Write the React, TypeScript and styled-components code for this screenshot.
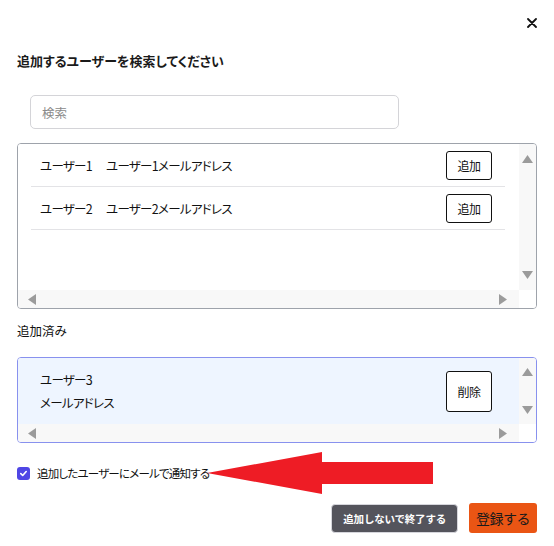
import React from "react";
import styled, { createGlobalStyle } from "styled-components";

const Global = createGlobalStyle`
  html, body { margin: 0; padding: 0; background: #ffffff; }
  body {
    font-family: "Noto Sans CJK JP", "Noto Sans", sans-serif;
    color: #1a1a1a;
    font-feature-settings: "palt";
  }
  * { box-sizing: border-box; }
`;

const Dialog = styled.div`
  position: relative;
  width: 554px;
  height: 546px;
  padding: 0 17px;
  display: flex;
  flex-direction: column;
`;

const Header = styled.div`
  display: flex;
  justify-content: flex-end;
  height: 46px;
  padding-top: 17px;
  margin-right: -1px;
`;

const CloseButton = styled.button`
  border: none;
  background: transparent;
  padding: 0;
  width: 12px;
  height: 12px;
  display: flex;
  align-items: center;
  justify-content: center;
  cursor: pointer;
`;

const Title = styled.h2`
  margin: 0;
  font-size: 13px;
  font-weight: 600;
  line-height: 30px;
  color: #1a1a1a;
`;

const SearchWrap = styled.div`
  padding-left: 13px;
  margin-top: 19px;
`;

const SearchInput = styled.input`
  width: 369px;
  height: 34px;
  border: 1px solid #d4d4d8;
  border-radius: 5px;
  padding: 0 11px;
  font-family: inherit;
  font-size: 12.5px;
  color: #333;
  outline: none;
  &::placeholder { color: #8a8a8a; }
`;

const ListBox = styled.div<{ $active?: boolean; $height: number }>`
  margin-top: ${(p) => (p.$active ? 0 : 14)}px;
  height: ${(p) => p.$height}px;
  border: 1px solid ${(p) => (p.$active ? "#8891ee" : "#9ea3ab")};
  border-radius: 4px;
  overflow: hidden;
  display: grid;
  grid-template-columns: 1fr 17px;
  grid-template-rows: 1fr 18px;
  background: #ffffff;
`;

const ListContent = styled.div<{ $active?: boolean }>`
  background: ${(p) => (p.$active ? "#eef5ff" : "#ffffff")};
  overflow: hidden;
`;

const VTrack = styled.div<{ $pad: number }>`
  background: #f8f8f8;
  display: flex;
  flex-direction: column;
  justify-content: space-between;
  align-items: center;
  padding: ${(p) => p.$pad}px 0;
`;

const HTrack = styled.div`
  background: #f8f8f8;
  display: flex;
  justify-content: space-between;
  align-items: center;
  padding: 0 12px 0 10px;
`;

const Corner = styled.div`
  background: #ffffff;
`;

const Tri = ({ dir }: { dir: "up" | "down" | "left" | "right" }) => {
  const pts = {
    up: "0,8 5.5,0 11,8",
    down: "0,0 11,0 5.5,8",
    left: "8,0 8,11 0,5.5",
    right: "0,0 8,5.5 0,11",
  }[dir];
  const vertical = dir === "up" || dir === "down";
  return (
    <svg width={vertical ? 11 : 8} height={vertical ? 8 : 11} viewBox={vertical ? "0 0 11 8" : "0 0 8 11"}>
      <polygon points={pts} fill="#9b9b9b" />
    </svg>
  );
};

const Row = styled.div<{ $tall?: boolean }>`
  display: flex;
  align-items: center;
  justify-content: space-between;
  margin: 0 14px 0 13px;
  padding: 0 13px 0 9px;
  height: ${(p) => (p.$tall ? 66 : 43)}px;
  border-bottom: ${(p) => (p.$tall ? "none" : "1px solid #e3e3e6")};
`;

const RowText = styled.div`
  font-size: 12.5px;
  letter-spacing: -0.7px;
  line-height: 23px;
  color: #111;
  display: flex;
  flex-direction: column;
`;

const Inline = styled.span`
  display: flex;
  gap: 14px;
`;

const SmallButton = styled.button<{ $tall?: boolean }>`
  width: 46px;
  height: ${(p) => (p.$tall ? 41 : 29)}px;
  border: 1px solid #111;
  border-radius: 3px;
  background: #fff;
  font-family: inherit;
  font-size: 12px;
  letter-spacing: -0.5px;
  color: #111;
  padding: 0;
  cursor: pointer;
`;

const SectionLabel = styled.div`
  margin-top: 13px;
  height: 35px;
  font-size: 12.5px;
  line-height: 18px;
  color: #111;
`;

const CheckRow = styled.label`
  display: flex;
  align-items: center;
  gap: 7px;
  margin-top: 22px;
  font-size: 11.5px;
  letter-spacing: -0.8px;
  color: #111;
  height: 16px;
`;

const CheckBox = styled.span`
  width: 13px;
  height: 13px;
  border-radius: 3px;
  background: #4f46e5;
  display: flex;
  align-items: center;
  justify-content: center;
`;

const Footer = styled.div`
  display: flex;
  justify-content: flex-end;
  align-items: center;
  gap: 11px;
  margin-top: 22px;
`;

const DarkButton = styled.button`
  height: 29px;
  padding: 0 11px;
  border: 1px solid #d6d6dc;
  border-radius: 4px;
  background: #54545c;
  color: #fff;
  font-family: inherit;
  font-size: 10.5px;
  letter-spacing: -0.2px;
  font-weight: 700;
  cursor: pointer;
`;

const PrimaryButton = styled.button`
  height: 30px;
  padding: 0 7px;
  border: none;
  border-radius: 3px;
  background: #ea5514;
  color: #1a1a1a;
  font-family: inherit;
  font-size: 14px;
  letter-spacing: -0.5px;
  cursor: pointer;
`;

const Arrow = styled.svg`
  position: absolute;
  left: 207px;
  top: 451px;
`;

const users = [
  { name: "ユーザー1", mail: "ユーザー1メールアドレス" },
  { name: "ユーザー2", mail: "ユーザー2メールアドレス" },
];

export default function App() {
  return (
    <>
      <Global />
      <Dialog>
        <Header>
          <CloseButton aria-label="close">
            <svg width="10" height="10" viewBox="0 0 10 10">
              <path d="M1 1L9 9M9 1L1 9" stroke="#111" strokeWidth="1.8" strokeLinecap="round" />
            </svg>
          </CloseButton>
        </Header>
        <Title>追加するユーザーを検索してください</Title>
        <SearchWrap>
          <SearchInput placeholder="検索" />
        </SearchWrap>
        <ListBox $height={166}>
          <ListContent>
            {users.map((u) => (
              <Row key={u.name}>
                <RowText>
                  <Inline>
                    <span>{u.name}</span>
                    <span>{u.mail}</span>
                  </Inline>
                </RowText>
                <SmallButton>追加</SmallButton>
              </Row>
            ))}
          </ListContent>
          <VTrack $pad={11}>
            <Tri dir="up" />
            <Tri dir="down" />
          </VTrack>
          <HTrack>
            <Tri dir="left" />
            <Tri dir="right" />
          </HTrack>
          <Corner />
        </ListBox>
        <SectionLabel>追加済み</SectionLabel>
        <ListBox $active $height={86}>
          <ListContent $active>
            <Row $tall>
              <RowText>
                <span>ユーザー3</span>
                <span>メールアドレス</span>
              </RowText>
              <SmallButton $tall>削除</SmallButton>
            </Row>
          </ListContent>
          <VTrack $pad={10}>
            <Tri dir="up" />
            <Tri dir="down" />
          </VTrack>
          <HTrack>
            <Tri dir="left" />
            <Tri dir="right" />
          </HTrack>
          <Corner />
        </ListBox>
        <CheckRow>
          <CheckBox>
            <svg width="9" height="9" viewBox="0 0 10 10">
              <path d="M2 5.2L4.1 7.2L8 2.8" stroke="#fff" strokeWidth="1.8" fill="none" strokeLinecap="round" strokeLinejoin="round" />
            </svg>
          </CheckBox>
          追加したユーザーにメールで通知する
        </CheckRow>
        <Footer>
          <DarkButton>追加しないで終了する</DarkButton>
          <PrimaryButton>登録する</PrimaryButton>
        </Footer>
        <Arrow width="228" height="44" viewBox="0 0 228 44">
          <polygon points="0,22 115,1 115,11 226,11 226,33 115,33 115,43" fill="#ee1c25" />
        </Arrow>
      </Dialog>
    </>
  );
}
